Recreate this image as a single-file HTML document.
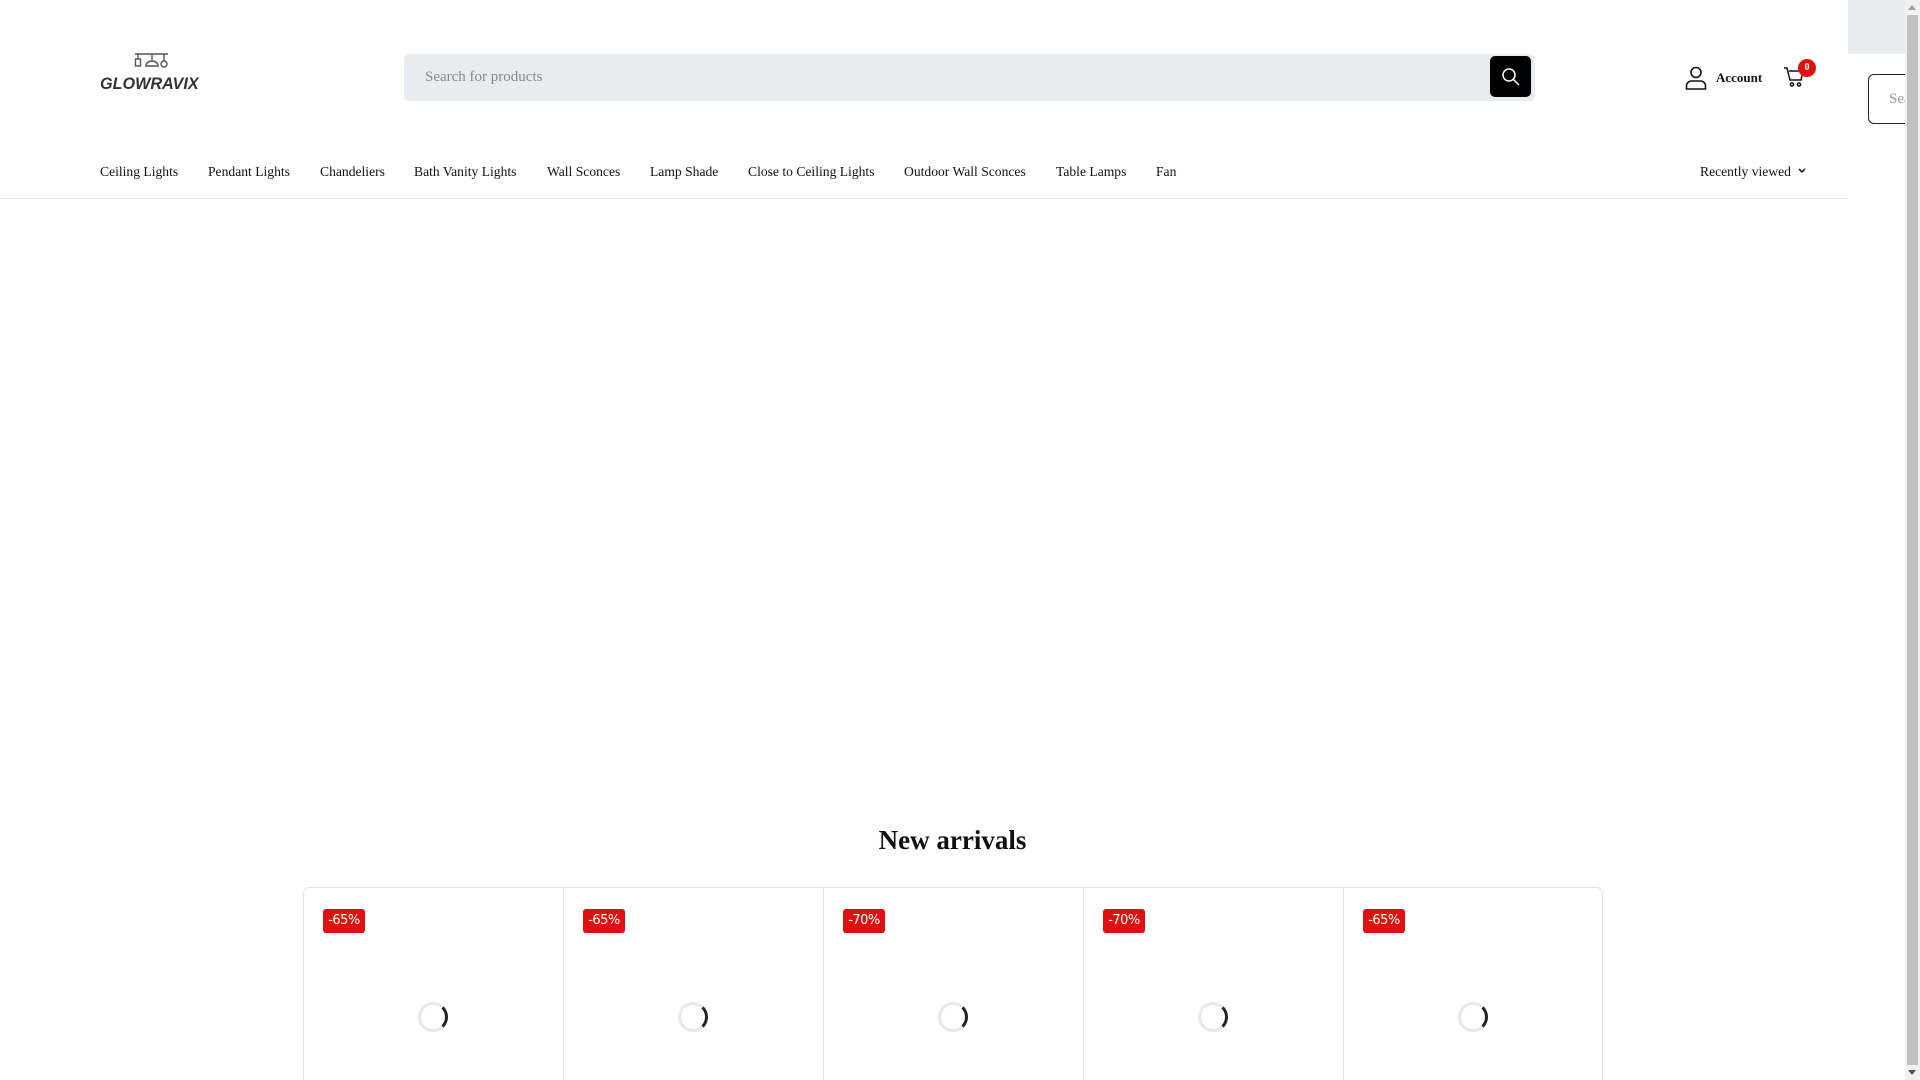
<!DOCTYPE html>
<html><head><meta charset="utf-8"><style>
*{margin:0;padding:0;box-sizing:border-box}
html,body{width:1920px;height:1080px;overflow:hidden}
body{background:#fff;font-family:"Liberation Serif",serif;color:#111;position:relative}
.abs{position:absolute}
.nav a{position:absolute;top:164px;font-size:13.6px;color:#111;text-decoration:none;white-space:nowrap}
.card{position:absolute;top:887px;width:260px;height:193px;border:1px solid #e2e2e2;border-right:none;border-bottom:none}
.badge{position:absolute;left:19px;top:21px;width:42px;height:24px;background:#e01010;color:#fff;border-radius:3px;font:13px "DejaVu Sans",sans-serif;letter-spacing:-0.5px;text-align:center;line-height:24px}
.spin{position:absolute;left:114px;top:114px;width:30px;height:30px;border-radius:50%;border:3px solid #e8e8e8;border-right-color:#222}
</style></head><body>
<svg class="abs" style="left:134px;top:53px" width="36" height="20" viewBox="0 0 36 20" fill="none" stroke="#555" stroke-width="1.4"><path d="M1 1H34M4 1V6M18 1V7M30 1V8"/><rect x="1.5" y="6" width="5" height="7"/><path d="M12 13a6 5 0 0 1 12 0Z"/><circle cx="30" cy="11" r="3"/></svg>
<div class="abs" style="left:100px;top:75px;font:italic 900 16.2px 'Liberation Sans',sans-serif;color:#333">GLOWRAVIX</div>
<div class="abs" style="left:404px;top:54px;width:1131px;height:47px;background:#e9ecee;border-radius:5px"></div>
<div class="abs" style="left:425px;top:69px;font-size:15px;color:#888">Search for products</div>
<div class="abs" style="left:1490px;top:56px;width:41px;height:41px;background:#000;border-radius:5px"></div>
<svg class="abs" style="left:1501px;top:67px" width="20" height="20" viewBox="0 0 20 20" fill="none" stroke="#fff" stroke-width="1.5"><circle cx="8" cy="8" r="6"/><path d="M12.5 12.5L18 18"/></svg>
<svg class="abs" style="left:1685px;top:66px" width="22" height="24" viewBox="0 0 22 24" fill="none" stroke="#111" stroke-width="1.6"><circle cx="11" cy="6.5" r="5"/><path d="M1.5 23v-3a5 5 0 0 1 5-5h9a5 5 0 0 1 5 5v3Z"/></svg>
<div class="abs" style="left:1716px;top:70px;font-weight:bold;font-size:13px">Account</div>
<svg class="abs" style="left:1783px;top:66px" width="22" height="22" viewBox="0 0 22 22" fill="none" stroke="#111" stroke-width="1.5"><path d="M1 2h3l3 12h11l2-9H6"/><circle cx="9" cy="18.5" r="1.6"/><circle cx="16" cy="18.5" r="1.6"/></svg>
<div class="abs" style="left:1798px;top:59px;width:18px;height:18px;border-radius:50%;background:#e01010;color:#fff;font-size:10px;font-weight:bold;text-align:center;line-height:18px">0</div>
<div class="abs" style="left:1848px;top:0;width:57px;height:54px;background:#e9ecee"></div>
<div class="abs" style="left:1868px;top:74px;width:60px;height:50px;border:1.5px solid #222;border-radius:6px"></div>
<div class="abs" style="left:1889px;top:91px;font-size:15px;color:#999">Sea</div>
<div class="abs" style="left:1905px;top:0;width:15px;height:1080px;background:#f1f1f1"></div>
<div class="abs" style="left:1907px;top:15px;width:11px;height:1050px;background:#c1c1c1"></div>
<div class="abs" style="left:1908px;top:5px;width:0;height:0;border-left:4px solid transparent;border-right:4px solid transparent;border-bottom:5px solid #a0a0a0"></div>
<div class="abs" style="left:1908px;top:1070px;width:0;height:0;border-left:4px solid transparent;border-right:4px solid transparent;border-top:5px solid #505050"></div>
<div class="nav">
<a style="left:100px">Ceiling Lights</a><a style="left:208px">Pendant Lights</a><a style="left:320px">Chandeliers</a><a style="left:414px">Bath Vanity Lights</a><a style="left:547px">Wall Sconces</a><a style="left:650px">Lamp Shade</a><a style="left:748px">Close to Ceiling Lights</a><a style="left:904px">Outdoor Wall Sconces</a><a style="left:1056px">Table Lamps</a><a style="left:1156px">Fan</a><a style="left:1700px">Recently viewed</a>
</div>
<svg class="abs" style="left:1798px;top:168px" width="8" height="6" viewBox="0 0 8 6" fill="none" stroke="#111" stroke-width="1.5"><path d="M1 1l3 3 3-3"/></svg>
<div class="abs" style="left:0;top:198px;width:1848px;height:1px;background:#e6e6e6"></div>
<div class="abs" style="left:0;top:825px;width:1905px;text-align:center;font-weight:bold;font-size:27px">New arrivals</div>
<div class="card" style="left:303px;border-top-left-radius:6px"><div class="badge">-65%</div><div class="spin"></div></div>
<div class="card" style="left:563px"><div class="badge">-65%</div><div class="spin"></div></div>
<div class="card" style="left:823px"><div class="badge">-70%</div><div class="spin"></div></div>
<div class="card" style="left:1083px"><div class="badge">-70%</div><div class="spin"></div></div>
<div class="card" style="left:1343px;border-right:1px solid #e2e2e2;border-top-right-radius:6px"><div class="badge">-65%</div><div class="spin"></div></div>
</body></html>
